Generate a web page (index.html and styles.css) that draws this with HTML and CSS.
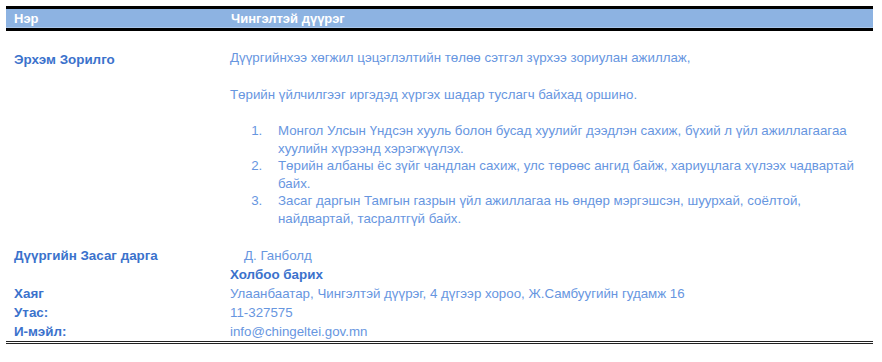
FILE: index.html
```html
<!DOCTYPE html>
<html lang="mn">
<head>
<meta charset="utf-8">
<title>Чингэлтэй дүүрэг</title>
<link rel="stylesheet" href="styles.css">
</head>
<body>
<div class="sheet">
  <div class="head">
    <div>Нэр</div>
    <div>Чингэлтэй дүүрэг</div>
  </div>
  <div class="row mission">
    <div class="label">Эрхэм Зорилго</div>
    <div class="text">
      <p>Дүүргийнхээ хөгжил цэцэглэлтийн төлөө сэтгэл зүрхээ зориулан ажиллаж,</p>
      <p class="gap">Төрийн үйлчилгээг иргэдэд хүргэх шадар туслагч байхад оршино.</p>
      <ol class="goals">
        <li>Монгол Улсын Үндсэн хууль болон бусад хуулийг дээдлэн сахиж, бүхий л үйл ажиллагаагаа хуулийн хүрээнд хэрэгжүүлэх.</li>
        <li>Төрийн албаны ёс зүйг чандлан сахиж, улс төрөөс ангид байж, хариуцлага хүлээх чадвартай байх.</li>
        <li>Засаг даргын Тамгын газрын үйл ажиллагаа нь өндөр мэргэшсэн, шуурхай, соёлтой, найдвартай, тасралтгүй байх.</li>
      </ol>
    </div>
  </div>
  <div class="contact">
    <div class="row">
      <div class="label">Дүүргийн Засаг дарга</div>
      <div class="text indent">Д. Ганболд</div>
    </div>
    <div class="row">
      <div class="label"></div>
      <div class="text strong">Холбоо барих</div>
    </div>
    <div class="row">
      <div class="label">Хаяг</div>
      <div class="text">Улаанбаатар, Чингэлтэй дүүрэг, 4 дүгээр хороо, Ж.Самбуугийн гудамж 16</div>
    </div>
    <div class="row">
      <div class="label">Утас:</div>
      <div class="text">11-327575</div>
    </div>
    <div class="row">
      <div class="label">И-мэйл:</div>
      <div class="text">info@chingeltei.gov.mn</div>
    </div>
  </div>
</div>
</body>
</html>
```
FILE: styles.css
```css
html, body {
  margin: 0;
  padding: 0;
  background: #ffffff;
}

body {
  font-family: "Liberation Sans", Arial, sans-serif;
  font-size: 13.3px;
  color: #6796df;
}

.sheet {
  width: 867px;
  margin: 6px 0 0 6px;
  border-bottom: 3px double #222222;
  height: 338px;
  box-sizing: border-box;
}

.head {
  display: grid;
  grid-template-columns: 217px 1fr;
  padding-left: 8px;
  height: 19px;
  line-height: 19px;
  background: #8db3e2;
  border-top: 3px solid #000000;
  border-bottom: 3px solid #000000;
  box-shadow: inset 0 -1px 0 #a9c6ea;
  color: #ffffff;
  font-weight: bold;
  font-size: 13px;
}

.row {
  display: grid;
  grid-template-columns: 216px 1fr;
  padding-left: 8px;
}

.label {
  font-weight: bold;
  color: #3b72cc;
  font-size: 13.4px;
}

.mission {
  padding-top: 18px;
  line-height: 17.5px;
}

.mission .label {
  padding-top: 2px;
}

.text p {
  margin: 0;
}

.text p.gap {
  margin-top: 19px;
}

.goals {
  margin: 19px 0 0 0;
  padding-left: 36px;
  width: 594px;
}

.goals li {
  padding-left: 12px;
}

.contact {
  margin-top: 19px;
  line-height: 19px;
}

.indent {
  padding-left: 14px;
}

.strong {
  font-weight: bold;
  color: #3b72cc;
  font-size: 13.4px;
}
```
